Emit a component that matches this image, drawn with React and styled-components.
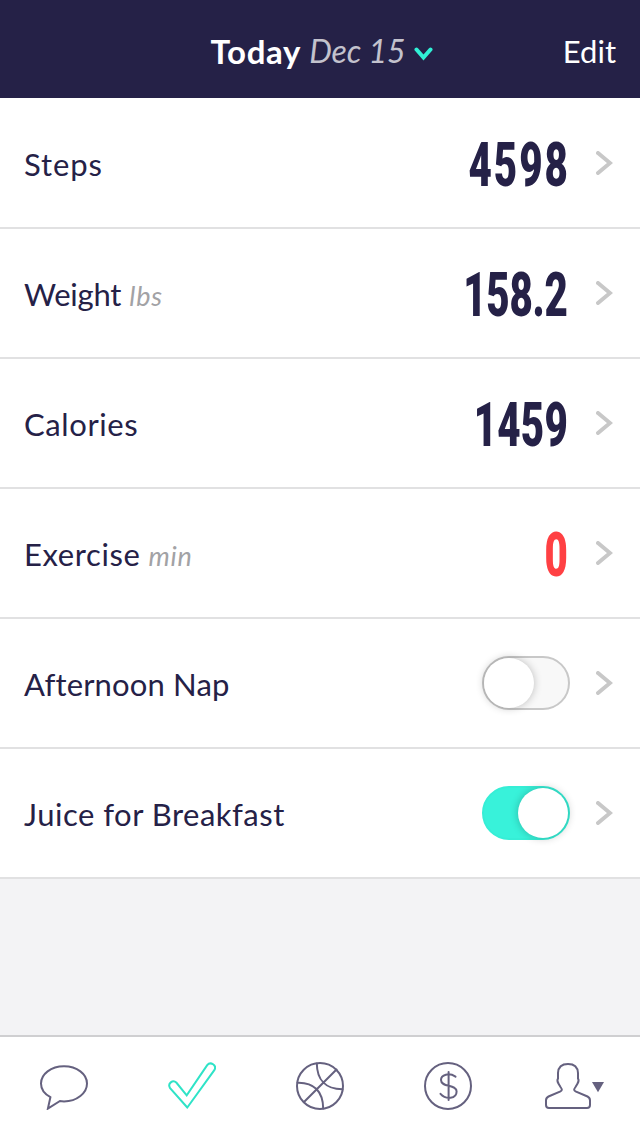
import { useState } from 'react';
import styled, { createGlobalStyle } from 'styled-components';

const GlobalStyle = createGlobalStyle`
  * {
    box-sizing: border-box;
  }

  body {
    margin: 0;
    background: #f3f3f5;
    font-family: Lato, 'Open Sans', sans-serif;
    color: #252147;
  }

  button {
    padding: 0;
    border: none;
    background: none;
    font: inherit;
    color: inherit;
    cursor: pointer;
  }
`;

const Screen = styled.div`
  width: 640px;
  height: 1136px;
  display: flex;
  flex-direction: column;
  overflow: hidden;
`;

const Header = styled.header`
  height: 98px;
  padding: 4px 24px 0 24px;
  display: grid;
  grid-template-columns: 1fr auto 1fr;
  align-items: center;
  background: #252147;
  color: #fff;
  font-size: 31px;
  line-height: 40px;
`;

const DateButton = styled.button`
  grid-column: 2;
  display: flex;
  align-items: center;
  padding-left: 3px;

  svg {
    margin: 5px 0 0 8px;
  }
`;

const Today = styled.span`
  font-weight: 700;
  font-size: 33px;
  letter-spacing: 0.7px;
`;

const DateText = styled.span`
  margin-left: 8px;
  font-style: italic;
  font-size: 32px;
  letter-spacing: -0.1px;
  color: #c3c2cd;
`;

const EditButton = styled.button`
  justify-self: end;
`;

const List = styled.main`
  flex: 1;
  background: #f3f3f5;
`;

const Row = styled.div`
  height: 130px;
  padding: 0 27px 0 24px;
  display: flex;
  align-items: center;
  background: #fff;
  border-bottom: 2px solid #e1e1e2;

  &:first-child {
    height: 131px;
  }
`;

const Label = styled.span`
  flex: 1;
  padding-top: 2px;
  font-size: 31px;
  line-height: 40px;
  letter-spacing: ${props => props.$spacing || 0}px;
`;

const Unit = styled.span`
  margin-left: 8px;
  font-size: 27px;
  font-style: italic;
  line-height: 1;
  letter-spacing: 0.8px;
  color: #a2a2a5;
`;

const Value = styled.span`
  margin-right: ${props => 28 - props.$spacing * 0.65}px;
  padding-top: 4px;
  font-family: Roboto, sans-serif;
  font-size: 62px;
  font-weight: 900;
  line-height: 64px;
  letter-spacing: ${props => props.$spacing}px;
  transform: scaleX(0.65);
  transform-origin: right center;
  color: ${props => props.$alert ? '#ff4043' : '#252147'};
`;

const Switch = styled.button`
  position: relative;
  width: 88px;
  height: 54px;
  margin-right: 26px;
  border: 2px solid ${props => props.$on ? '#36eed6' : '#c8c8c8'};
  border-radius: 27px;
  background: ${props => props.$on ? '#38f2da' : '#f8f8f8'};
`;

const Knob = styled.span`
  position: absolute;
  top: 0;
  left: ${props => props.$on ? '34px' : '0'};
  width: 50px;
  height: 50px;
  border-radius: 50%;
  background: #fff;
  box-shadow: 0 0 9px rgba(0, 0, 0, 0.24);
`;

const TabBar = styled.nav`
  height: 101px;
  display: grid;
  grid-template-columns: repeat(5, 1fr);
  background: #fff;
  border-top: 2px solid #cfcfd1;
`;

const Tab = styled.button`
  display: flex;
  align-items: center;
  justify-content: center;
  padding-bottom: 1px;
  color: ${props => props.$active ? '#2fe3c7' : '#65617f'};
`;

const ChevronRight = () => (
  <svg width="17" height="24" viewBox="0 0 17 24" fill="none" stroke="#c8c8c8" strokeWidth="4" strokeLinecap="round">
    <path d="M2 2L14 12L2 22" />
  </svg>
);

const ChevronDown = () => (
  <svg width="19" height="14" viewBox="0 0 19 14" fill="none" stroke="#30f0d6" strokeWidth="4" strokeLinecap="round">
    <path d="M2.5 2.5L9.5 10.5L16.5 2.5" />
  </svg>
);

const TabIcon = ({ width = 48, children }) => (
  <svg
    width={width}
    height="48"
    viewBox={`0 0 ${width} 48`}
    fill="none"
    stroke="currentColor"
    strokeWidth="2"
    strokeLinecap="round"
  >
    {children}
  </svg>
);

const ChatIcon = () => (
  <TabIcon>
    <path
      d="M10.4 35.2C4.6 32 1 27 1 21.5C1 12 11 4.3 24 4.3S47 12 47 21.5S37 39.4 24 39.4L20 39L7.9 46.6L10.4 35.2Z"
      strokeLinecap="butt"
    />
  </TabIcon>
);

const CheckIcon = () => (
  <TabIcon>
    <path d="M19.3 45.5L2.1 26.1C-0.8 21.5 4.8 17.3 8.3 20.5L18.7 33.4L39.2 3.2C42.5 -1 49.2 3.3 46.3 8.2L19.3 45.5Z" />
  </TabIcon>
);

const BallIcon = () => (
  <TabIcon>
    <circle cx="24" cy="24" r="23" />
    <path d="M40.5 7.5L8 40M20.8 1.5C21 17.5 29.5 27.3 46.5 27.2M1.5 20.7C18 20.2 27 29.5 27.2 46.5" />
  </TabIcon>
);

const DollarIcon = () => (
  <TabIcon>
    <circle cx="24" cy="24" r="23" />
    <path d="M24.6 10V38M31.5 14.6C25 10.4 17 12.5 17 18C17 26 32.6 21.6 32.6 29.5C32.6 36.8 22 38 16.5 31.8" />
  </TabIcon>
);

const ProfileIcon = () => (
  <TabIcon width={64}>
    <path d="M14 11C14.3 5 18 2 24 2S33.7 5 34 11V16.5C35.3 18.3 34.5 20 33.3 22L31.5 25C29.6 27.5 29.8 28.5 31.5 29.3L43.5 34.5C45.5 35.5 46 36 46 38.5V43C46 45.5 45 46 43 46H5C3 46 2 45.5 2 43V38.5C2 36 2.5 35.5 4.5 34.5L16.5 29.3C18.2 28.5 18.4 27.5 16.5 25L14.7 22C13.5 20 12.7 18.3 14 16.5V11Z" />
    <path d="M48 20H60L54 30.3Z" fill="currentColor" stroke="none" />
  </TabIcon>
);

const METRICS = [
  { name: 'Steps', value: '4598', spacing: 0.9, valueSpacing: 3 },
  { name: 'Weight', unit: 'lbs', value: '158.2', spacing: -0.2, valueSpacing: -0.4 },
  { name: 'Calories', value: '1459', spacing: 0.6, valueSpacing: 0.3 },
  { name: 'Exercise', unit: 'min', value: '0', spacing: 0.6, valueSpacing: 0 },
];

const TABS = [
  { id: 'chat', Icon: ChatIcon },
  { id: 'habits', Icon: CheckIcon },
  { id: 'activity', Icon: BallIcon },
  { id: 'money', Icon: DollarIcon },
  { id: 'profile', Icon: ProfileIcon },
];

function App() {
  const [activeTab, setActiveTab] = useState('habits');
  const [habits, setHabits] = useState([
    { name: 'Afternoon Nap', done: false, spacing: 0.15 },
    { name: 'Juice for Breakfast', done: true, spacing: 0.5 },
  ]);

  const toggleHabit = (name) => {
    setHabits(habits.map(h => h.name === name ? { ...h, done: !h.done } : h));
  };

  return (
    <Screen>
      <GlobalStyle />
      <Header>
        <DateButton>
          <Today>Today</Today>
          <DateText>Dec 15</DateText>
          <ChevronDown />
        </DateButton>
        <EditButton>Edit</EditButton>
      </Header>

      <List>
        {METRICS.map(({ name, unit, value, spacing, valueSpacing }) => (
          <Row key={name}>
            <Label $spacing={spacing}>
              {name}
              {unit && <Unit>{unit}</Unit>}
            </Label>
            <Value $alert={value === '0'} $spacing={valueSpacing}>{value}</Value>
            <ChevronRight />
          </Row>
        ))}
        {habits.map(({ name, done, spacing }) => (
          <Row key={name}>
            <Label $spacing={spacing}>{name}</Label>
            <Switch $on={done} onClick={() => toggleHabit(name)}>
              <Knob $on={done} />
            </Switch>
            <ChevronRight />
          </Row>
        ))}
      </List>

      <TabBar>
        {TABS.map(({ id, Icon }) => (
          <Tab key={id} $active={id === activeTab} onClick={() => setActiveTab(id)}>
            <Icon />
          </Tab>
        ))}
      </TabBar>
    </Screen>
  );
}

export default App;
